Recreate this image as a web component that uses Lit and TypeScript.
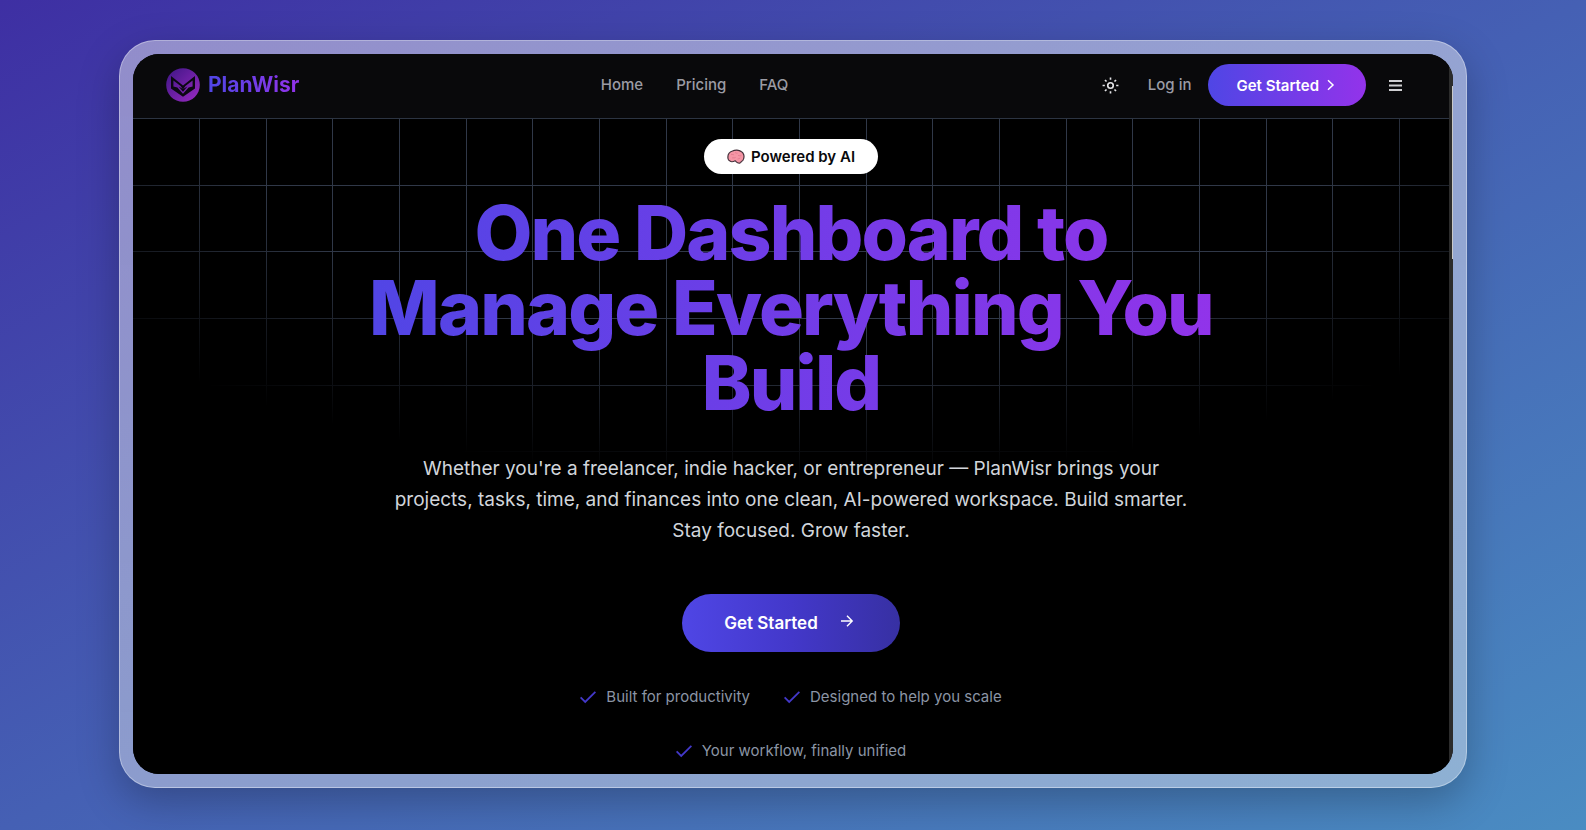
import { LitElement, html, css } from "lit";
import { customElement } from "lit/decorators.js";

const check = html`<svg class="check" viewBox="0 0 16 16" aria-hidden="true">
  <path d="M0.600 8.400 L5.200 13 L15.400 2.800" fill="none" stroke="currentColor" stroke-width="1.800" />
</svg>`;

@customElement("site-header")
class SiteHeader extends LitElement {
  static styles = css`
    :host {
      display: block;
      background: #09090b;
      border-bottom: 1px solid #2c3442;
    }
    .bar {
      display: flex;
      justify-content: space-between;
      align-items: center;
      height: 64px;
      padding: 0 33px 2px;
      box-sizing: border-box;
    }
    a {
      color: inherit;
      text-decoration: none;
    }
    .brand {
      display: flex;
      align-items: center;
      gap: 8px;
      font-size: 21px;
      font-weight: 700;
      line-height: 32px;
    }
    .brand svg {
      width: 34px;
      height: 34px;
    }
    .name {
      background: linear-gradient(90deg, #4f46e5, #9333ea);
      background-clip: text;
      -webkit-background-clip: text;
      color: transparent;
    }
    nav {
      display: flex;
      gap: 33px;
    }
    nav,
    .login {
      font-size: 15px;
      line-height: 20px;
      font-weight: 500;
      color: #9b9ba4;
    }
    .actions {
      display: flex;
      align-items: center;
    }
    button {
      display: flex;
      align-items: center;
      justify-content: center;
      border: 0;
      padding: 0;
      background: none;
      color: #e4e4e7;
      font: inherit;
      cursor: pointer;
    }
    .icon {
      width: 42px;
      height: 42px;
    }
    .icon svg {
      width: 17px;
      height: 17px;
    }
    .login {
      padding: 0 17px 0 16px;
    }
    .cta {
      display: flex;
      align-items: center;
      gap: 5px;
      height: 42px;
      margin-right: 8px;
      padding: 0 28px;
      border-radius: 21px;
      background: linear-gradient(90deg, #4f46e5, #9333ea);
      color: #fff;
      font-size: 15px;
      font-weight: 600;
    }
    .cta svg {
      width: 14px;
      height: 14px;
    }
  `;

  render() {
    return html`
      <header class="bar">
        <a class="brand" href="#">
          <svg viewBox="0 0 34 34" aria-hidden="true">
            <defs>
              <linearGradient id="disc" gradientUnits="userSpaceOnUse" x1="3" y1="3" x2="31" y2="31">
                <stop offset="0" stop-color="#45178a" />
                <stop offset="1" stop-color="#9329bd" />
              </linearGradient>
            </defs>
            <circle cx="17" cy="17" r="16.800" fill="url(#disc)" />
            <path d="M5 8 L17 17.400 L29 8 V20.600 L17 28.800 L5 20.600 Z" fill="#0b0812" />
            <path
              d="M7.400 12.600 L14.600 18 L17 21.400 L19.400 18 L26.600 12.600 V18.400 L22.600 19.600 L17 25.800 L11.400 19.600 L7.400 18.400 Z"
              fill="url(#disc)"
            />
            <path d="M12.600 18.400 L17 21 L21.400 18.400 L17 23.800 Z" fill="#0b0812" />
          </svg>
          <span class="name">PlanWisr</span>
        </a>
        <nav aria-label="Main">
          <a href="#home">Home</a>
          <a href="#pricing">Pricing</a>
          <a href="#faq">FAQ</a>
        </nav>
        <div class="actions">
          <button class="icon" aria-label="Toggle theme">
            <svg viewBox="0 0 24 24" fill="none" stroke="currentColor" stroke-width="2.300" aria-hidden="true">
              <circle cx="12" cy="12" r="3.900" />
              <path d="M12 0.800v3.200M12 20v3.200M4.200 4.200l2.200 2.200M17.600 17.600l2.200 2.200M0.800 12h3.200M20 12h3.200M4.200 19.800l2.200-2.200M17.600 6.400l2.200-2.200" />
            </svg>
          </button>
          <a class="login" href="#login">Log in</a>
          <a class="cta" href="#start">
            Get Started
            <svg viewBox="0 0 14 14" fill="none" stroke="currentColor" stroke-width="1.500" aria-hidden="true">
              <path d="M4 2.200 L9 7 L4 11.800" />
            </svg>
          </a>
          <button class="icon" aria-label="Open menu">
            <svg viewBox="0 0 17 17" fill="none" stroke="#cfcfd2" stroke-width="1.800" aria-hidden="true">
              <path d="M2 4h13M2 8.500h13M2 13h13" />
            </svg>
          </button>
        </div>
      </header>
    `;
  }
}

@customElement("hero-section")
class HeroSection extends LitElement {
  static styles = css`
    :host {
      display: block;
      position: relative;
      background: #000;
    }
    .grid {
      position: absolute;
      inset: 0;
      --line: #303848;
      background-image: linear-gradient(
          90deg,
          transparent 66px,
          var(--line) 66px 67px,
          transparent 67px 133px,
          var(--line) 133px 134px,
          transparent 134px 199px,
          var(--line) 199px
        ),
        linear-gradient(
          transparent 66px,
          var(--line) 66px 67px,
          transparent 67px 132px,
          var(--line) 132px 133px,
          transparent 133px 199px,
          var(--line) 199px
        );
      background-size: 200px 200px;
      -webkit-mask-image: radial-gradient(ellipse 60% 50% at 50% 0%, #000 70%, transparent 110%);
      mask-image: radial-gradient(ellipse 60% 50% at 50% 0%, #000 70%, transparent 110%);
    }
    .content {
      position: relative;
      display: flex;
      flex-direction: column;
      align-items: center;
      padding: 20px 32px 13px;
      text-align: center;
    }
    .badge {
      display: flex;
      align-items: center;
      gap: 6px;
      height: 35px;
      padding: 0 23px;
      border-radius: 18px;
      background: #fff;
      color: #09090b;
      font-size: 15px;
      font-weight: 600;
    }
    .badge svg {
      width: 18px;
      height: 18px;
    }
    h1 {
      margin: 21px 0 0;
      max-width: 900px;
      font-size: 75px;
      line-height: 75px;
      font-weight: 800;
      letter-spacing: -0.025em;
      background: linear-gradient(90deg, #4f46e5, #9333ea);
      background-clip: text;
      -webkit-background-clip: text;
      color: transparent;
    }
    p {
      margin: 33px 0 0;
      max-width: 800px;
      font-size: 19px;
      line-height: 31px;
      color: #d1d5db;
    }
    .cta {
      display: flex;
      align-items: center;
      gap: 22px;
      height: 58px;
      margin-top: 48px;
      padding: 0 46px 0 42px;
      border-radius: 29px;
      background: linear-gradient(90deg, #4f46e5, #4338ca 50%, #3730a3);
      color: #fff;
      font-size: 17px;
      font-weight: 600;
      text-decoration: none;
    }
    .cta svg {
      width: 14px;
      height: 14px;
      margin-bottom: 4px;
    }
    ul {
      display: flex;
      flex-wrap: wrap;
      justify-content: center;
      gap: 34px;
      list-style: none;
      max-width: 540px;
      margin: 35px 0 0;
      padding: 0;
      font-size: 15px;
      line-height: 20px;
      color: #8b95a5;
    }
    li {
      display: flex;
      align-items: center;
      gap: 10px;
    }
    .check {
      width: 16px;
      height: 16px;
      color: #4338ca;
    }
  `;

  render() {
    return html`
      <div class="grid"></div>
      <section class="content">
        <span class="badge">
          <svg viewBox="0 0 18 18" aria-hidden="true">
            <path
              d="M1 10.500 C0.500 7 2.500 4 5.500 3 C8 1.600 12 1.700 14.200 3.500 C16.600 4.700 17.500 8 16.700 10.500 C16.300 12.500 15 13.300 14.300 13.500 C14 15 12.300 15.600 10.600 14.800 C9.300 14.300 8.700 13.300 8.200 12.800 C6 13.900 3.600 13.700 2.800 12.800 C1.700 12.500 1.100 11.600 1 10.500Z"
              fill="#f595a5"
              stroke="#44303a"
              stroke-width="1.200"
            />
            <path
              d="M4 6.500c1.500-.4 2 .6 3 0M8 4.500c1 .2 1.300 1 2.500 .7M11 7.500c1.300-.3 2 .8 3.300 0M5 10c1.600-.6 2.400.3 3.600-.6M10.500 11c1.200 0 1.800-.4 2.600-1"
              fill="none"
              stroke="#dd7389"
              stroke-width="0.700"
            />
          </svg>
          Powered by AI
        </span>
        <h1>One Dashboard to Manage Everything You Build</h1>
        <p>
          Whether you're a freelancer, indie hacker, or entrepreneur — PlanWisr brings your
          projects, tasks, time, and finances into one clean, AI-powered workspace. Build smarter.
          Stay focused. Grow faster.
        </p>
        <a class="cta" href="#start">
          Get Started
          <svg viewBox="0 0 14 14" fill="none" stroke="currentColor" stroke-width="1.400" aria-hidden="true">
            <path d="M1 7h11M7 1.800 L12.200 7 L7 12.200" />
          </svg>
        </a>
        <ul>
          <li>${check}Built for productivity</li>
          <li>${check}Designed to help you scale</li>
          <li>${check}Your workflow, finally unified</li>
        </ul>
      </section>
    `;
  }
}

@customElement("app-root")
class AppRoot extends LitElement {
  static styles = css`
    :host {
      display: block;
      box-sizing: border-box;
      min-height: 100vh;
      padding: 40px 119px 42px;
      font-family: Inter, "Liberation Sans", sans-serif;
      background: linear-gradient(to bottom right, #3e2fa3 0%, #4560b4 50%, #4a8cc2 100%);
    }
    .frame {
      padding: 13px;
      border: 1px solid rgba(255, 255, 255, 0.35);
      border-radius: 36px;
      background: linear-gradient(rgba(240, 240, 245, 0.47), rgba(225, 228, 235, 0.45));
      box-shadow: 0 14px 40px rgba(0, 0, 0, 0.25);
    }
    .window {
      display: flex;
      overflow: hidden;
      border-radius: 26px;
      background: #000;
    }
    .page {
      flex: 1;
      min-width: 0;
    }
    .scroll {
      display: flex;
      flex-direction: column;
      align-items: flex-end;
      width: 4px;
      background: #2c2c2c;
    }
    .thumb {
      width: 1px;
      height: 24%;
      margin-top: 32px;
      background: #c8c8c8;
    }
  `;

  render() {
    return html`
      <div class="frame">
        <div class="window">
          <main class="page">
            <site-header></site-header>
            <hero-section></hero-section>
          </main>
          <div class="scroll" aria-hidden="true"><div class="thumb"></div></div>
        </div>
      </div>
    `;
  }
}
